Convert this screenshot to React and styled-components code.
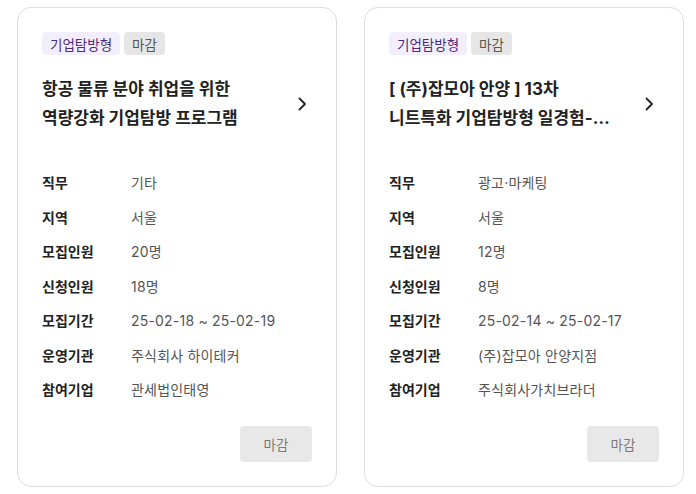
import React from 'react';
import styled, { createGlobalStyle } from 'styled-components';

const GlobalStyle = createGlobalStyle`
  body {
    margin: 0;
    background: #ffffff;
    font-family: 'Inter', 'Noto Sans CJK KR', sans-serif;
    color: #222;
  }
`;

const Page = styled.div`
  display: flex;
  gap: 27px;
  padding: 7px 0 0 17px;
`;

const Card = styled.div`
  width: 320px;
  box-sizing: border-box;
  border: 1px solid #dcdcdc;
  border-radius: 14px;
  padding: 24px;
  display: flex;
  flex-direction: column;
  background: #fff;
`;

const Badges = styled.div`
  display: flex;
  gap: 4px;
`;

const Badge = styled.span`
  display: inline-flex;
  align-items: center;
  height: 23px;
  padding: 0 8px;
  border-radius: 4px;
  font-size: 13.5px;
  background: ${(p) => (p.$tone === 'purple' ? '#f3eefc' : '#e6e6e6')};
  color: ${(p) => (p.$tone === 'purple' ? '#4a2c78' : '#555')};
`;

const TitleRow = styled.div`
  display: flex;
  align-items: center;
  gap: 10px;
  margin-top: 20px;
  cursor: pointer;
`;

const Title = styled.h2`
  flex: 1;
  margin: 0;
  font-size: 17px;
  font-weight: 700;
  line-height: 28.5px;
  color: #222;
  display: -webkit-box;
  -webkit-line-clamp: 2;
  -webkit-box-orient: vertical;
  overflow: hidden;
  word-break: keep-all;
`;

const Chevron = styled.svg`
  width: 24px;
  height: 24px;
  flex-shrink: 0;
`;

const InfoList = styled.dl`
  margin: 41px 0 0;
  display: flex;
  flex-direction: column;
  gap: 14.5px;
`;

const InfoRow = styled.div`
  display: flex;
  align-items: center;
  font-size: 14px;
  line-height: 20px;
`;

const Label = styled.dt`
  width: 89px;
  font-weight: 600;
  color: #222;
`;

const Value = styled.dd`
  margin: 0;
  color: #555;
  letter-spacing: 0.2px;
`;

const Footer = styled.div`
  display: flex;
  justify-content: flex-end;
  margin-top: 26px;
`;

const StatusButton = styled.button`
  width: 72px;
  height: 36px;
  border: none;
  border-radius: 4px;
  background: #e8e8e8;
  color: #7a7a7a;
  font-family: inherit;
  font-size: 13.5px;
`;

const programs = [
  {
    title: '항공 물류 분야 취업을 위한 역량강화 기업탐방 프로그램',
    info: [
      ['직무', '기타'],
      ['지역', '서울'],
      ['모집인원', '20명'],
      ['신청인원', '18명'],
      ['모집기간', '25-02-18 ~ 25-02-19'],
      ['운영기관', '주식회사 하이테커'],
      ['참여기업', '관세법인태영'],
    ],
  },
  {
    title: '[ (주)잡모아 안양 ] 13차 니트특화 기업탐방형 일경험-기업탐방 프로그램',
    info: [
      ['직무', '광고·마케팅'],
      ['지역', '서울'],
      ['모집인원', '12명'],
      ['신청인원', '8명'],
      ['모집기간', '25-02-14 ~ 25-02-17'],
      ['운영기관', '(주)잡모아 안양지점'],
      ['참여기업', '주식회사가치브라더'],
    ],
  },
];

function ProgramCard({ program }) {
  return (
    <Card>
      <Badges>
        <Badge $tone="purple">기업탐방형</Badge>
        <Badge>마감</Badge>
      </Badges>
      <TitleRow>
        <Title>{program.title}</Title>
        <Chevron viewBox="0 0 24 24" fill="none">
          <path
            d="M11.5 6.5l5.5 5.5-5.5 5.5"
            stroke="#222"
            strokeWidth="1.8"
            strokeLinecap="round"
            strokeLinejoin="round"
          />
        </Chevron>
      </TitleRow>
      <InfoList>
        {program.info.map(([label, value]) => (
          <InfoRow key={label}>
            <Label>{label}</Label>
            <Value>{value}</Value>
          </InfoRow>
        ))}
      </InfoList>
      <Footer>
        <StatusButton disabled>마감</StatusButton>
      </Footer>
    </Card>
  );
}

export default function App() {
  return (
    <>
      <GlobalStyle />
      <Page>
        {programs.map((p) => (
          <ProgramCard key={p.title} program={p} />
        ))}
      </Page>
    </>
  );
}
